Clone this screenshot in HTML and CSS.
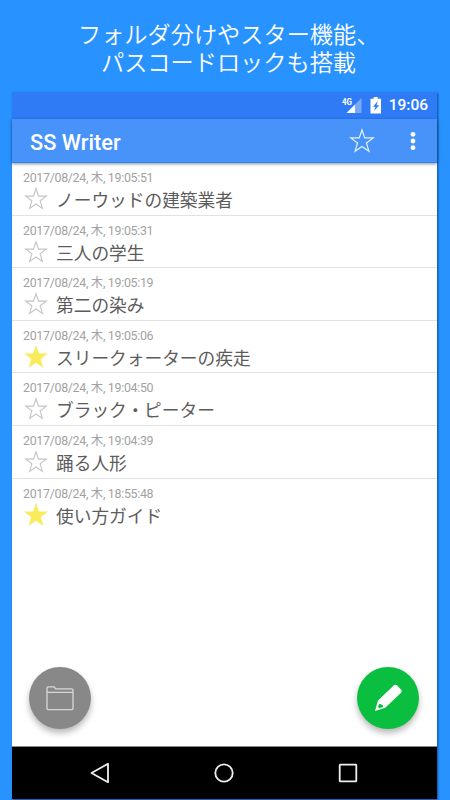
FILE: index.html
```html
<!DOCTYPE html>
<html lang="ja">
<head>
<meta charset="utf-8">
<title>SS Writer</title>
<link rel="stylesheet" href="styles.css">
</head>
<body>
<svg class="defs" width="0" height="0">
  <symbol id="star" viewBox="0 0 24 24"><path d="M12 1.800l2.500 7.300h7.900l-6.300 4.700 2.300 7.600L12 17l-6.400 4.400 2.300-7.600-6.300-4.700h7.900z"/></symbol>
</svg>
<h1 class="headline">フォルダ分けやスター機能、<br><span class="second">パスコードロックも搭載</span></h1>
<main class="phone">
  <div class="status">
    <svg class="signal" viewBox="0 0 20 18" width="20" height="18"><path d="M19.500 1v15H4.500z" fill="#7aa9fa"/><path d="M13 7.500V16H4.500z" fill="#fff"/><text x="0" y="7.500" class="net" textLength="10" lengthAdjust="spacingAndGlyphs">4G</text></svg>
    <svg class="battery" viewBox="0 0 12 17" width="12" height="17"><path d="M3.700 0h4v1.800H11V16.500H.5V1.800h3.200z" fill="#fff"/><path d="M7.800 4L3 9.700h2.500L4 14l5.200-5.700H6.600z" fill="#2f7bf6"/></svg>
    <span class="clock">19:06</span>
  </div>
  <header class="toolbar">
    <span class="name">SS Writer</span>
    <svg class="fav" width="26" height="26"><use href="#star"/></svg>
    <svg class="more" width="6" height="20" viewBox="0 0 6 20" fill="#fff"><circle cx="3" cy="3.300" r="2.400"/><circle cx="3" cy="10" r="2.400"/><circle cx="3" cy="16.700" r="2.400"/></svg>
  </header>
  <section class="notes">
    <article class="note"><time>2017/08/24, 木, 19:05:51</time><div class="line"><svg class="star"><use href="#star"/></svg><h2>ノーウッドの建築業者</h2></div></article>
    <article class="note"><time>2017/08/24, 木, 19:05:31</time><div class="line"><svg class="star"><use href="#star"/></svg><h2>三人の学生</h2></div></article>
    <article class="note"><time>2017/08/24, 木, 19:05:19</time><div class="line"><svg class="star"><use href="#star"/></svg><h2>第二の染み</h2></div></article>
    <article class="note"><time>2017/08/24, 木, 19:05:06</time><div class="line"><svg class="star on"><use href="#star"/></svg><h2>スリークォーターの疾走</h2></div></article>
    <article class="note"><time>2017/08/24, 木, 19:04:50</time><div class="line"><svg class="star"><use href="#star"/></svg><h2>ブラック・ピーター</h2></div></article>
    <article class="note"><time>2017/08/24, 木, 19:04:39</time><div class="line"><svg class="star"><use href="#star"/></svg><h2>踊る人形</h2></div></article>
    <article class="note"><time>2017/08/24, 木, 18:55:48</time><div class="line"><svg class="star on"><use href="#star"/></svg><h2>使い方ガイド</h2></div></article>
  </section>
  <div class="actions">
    <div class="fab folder"><svg width="62" height="62" viewBox="0 0 62 62" fill="none" stroke="#d8d8d8" stroke-width="1.300" stroke-linejoin="round"><path d="M18 41.500V21q0-1.200 1.200-1.200h5.600q.9 0 1.200.9l.4 1.100h16.400q1.200 0 1.200 1.200v18.500q0 1.200-1.200 1.200H19.200q-1.200 0-1.200-1.200zM18 25.300h26"/></svg></div>
    <div class="fab edit"><svg width="62" height="62" viewBox="0 0 62 62"><path d="M18 44l3-10.500L36.700 18.500q1.500-1.300 3.300-.3l4.200 4.500q1.200 1.500-.1 3L28.200 40.700z" fill="#fff"/><path d="M22.300 36.700q1.200-.2 1.700.9l1.700.7q.9.500.3 1.600l-3.700 1.300-1.300-1.300z" fill="#0abf3f"/></svg></div>
  </div>
  <nav class="keys">
    <svg width="22" height="22" viewBox="0 0 22 22"><path d="M19 1.800v18.400L2.500 11z"/></svg>
    <svg width="22" height="22" viewBox="0 0 22 22"><circle cx="11" cy="11" r="8.700"/></svg>
    <svg width="22" height="22" viewBox="0 0 22 22"><rect x="2.700" y="2.700" width="16.600" height="16.600" rx=".5"/></svg>
  </nav>
</main>
</body>
</html>
```

FILE: styles.css
```css
* { box-sizing: border-box; }
body {
  margin: 0;
  width: 450px;
  height: 800px;
  overflow: hidden;
  display: flex;
  flex-direction: column;
  background: #2893ff;
  font-family: Roboto, "Noto Sans CJK JP", sans-serif;
}
.defs { display: none; }
.headline {
  flex: none;
  height: 92px;
  margin: 0;
  padding: 21px 0 0 78px;
  color: #fff;
  font: 350 23.200px/28px "Liberation Sans", "Noto Sans CJK JP", sans-serif;
  white-space: nowrap;
}
.second { margin-left: 23px; }
.phone {
  width: 425px;
  height: 707px;
  margin-left: 12px;
  display: flex;
  flex-direction: column;
  background: #fff;
  box-shadow: 1px 1px 2px rgba(0, 30, 90, .6);
}
.status {
  flex: none;
  height: 27px;
  display: flex;
  align-items: center;
  justify-content: flex-end;
  padding-right: 9px;
  background: #2f7bf6;
  color: #fff;
}
.signal { margin: 0 8px 0 0; }
.net { font: 700 9px Roboto, sans-serif; fill: #fff; }
.battery { margin-right: 7px; }
.clock { font-size: 15.500px; font-weight: 500; line-height: 27px; }
.toolbar {
  flex: none;
  height: 44px;
  display: flex;
  align-items: center;
  padding: 0 21.500px 0 18px;
  background: #4893fa;
  border-bottom: 1px solid #2588f5;
  box-shadow: 0 1px 3px rgba(0, 0, 0, .45);
}
.name { margin-top: 3px; color: #fff; font-size: 21.800px; font-weight: 500; }
.fav { margin-left: auto; fill: none; stroke: #e6f1ff; stroke-width: 1.100; }
.more { margin: 1px 0 0 35px; }
.notes { flex: 1; }
.note {
  height: 52.600px;
  padding: 7px 0 0 11px;
  border-bottom: 1px solid #e2e2e2;
}
.note:last-child { border-bottom: 0; }
time {
  display: block;
  height: 16px;
  color: #a2a2a2;
  font-size: 12.400px;
  line-height: 16px;
  letter-spacing: -.3px;
  white-space: nowrap;
}
.line { display: flex; align-items: center; height: 26px; padding-left: 1px; }
.star { width: 24px; height: 24px; fill: none; stroke: #c4c4c4; stroke-width: 1.100; }
.star.on { fill: #f9eb5b; stroke: #f9eb5b; }
h2 {
  margin: 0 0 0 8px;
  color: #5c5c5c;
  font: 400 17.700px/26px "Noto Sans CJK JP", sans-serif;
}
.actions {
  flex: none;
  display: flex;
  justify-content: space-between;
  padding: 0 18px 17px 17px;
}
.fab {
  width: 62px;
  height: 62px;
  border-radius: 50%;
  box-shadow: 0 4px 6px rgba(0, 0, 0, .28);
}
.fab svg { display: block; }
.folder { background: #888; }
.edit { background: #0abf3f; }
.keys {
  flex: none;
  height: 53px;
  display: flex;
  align-items: center;
  justify-content: center;
  gap: 102px;
  padding-right: 1px;
  background: #000;
  border-top: 1px solid #888;
}
.keys svg { fill: none; stroke: #eee; stroke-width: 1.800; stroke-linejoin: round; }
```
